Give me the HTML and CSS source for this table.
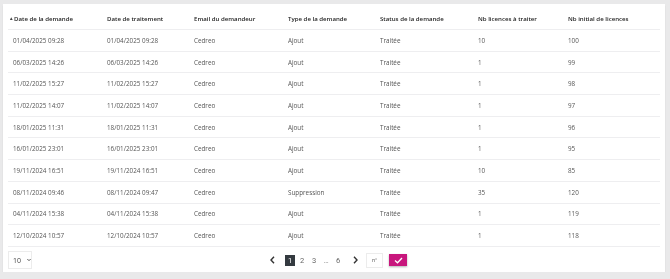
FILE: index.html
```html
<!DOCTYPE html>
<html lang="fr">
<head>
<meta charset="utf-8">
<link rel="stylesheet" href="styles.css">
</head>
<body>
<div class="card">
  <table class="grid">
    <colgroup>
      <col class="c1"><col class="c2"><col class="c3"><col class="c4"><col class="c5"><col class="c6"><col class="c7">
    </colgroup>
    <thead>
      <tr>
        <th><span class="sort">&#9652;</span>Date de la demande</th>
        <th>Date de traitement</th>
        <th>Email du demandeur</th>
        <th>Type de la demande</th>
        <th>Status de la demande</th>
        <th>Nb licences à traiter</th>
        <th>Nb initial de licences</th>
      </tr>
    </thead>
    <tbody>
      <tr><td>01/04/2025 09:28</td><td>01/04/2025 09:28</td><td>Cedreo</td><td>Ajout</td><td>Traitée</td><td>10</td><td>100</td></tr>
      <tr><td>06/03/2025 14:26</td><td>06/03/2025 14:26</td><td>Cedreo</td><td>Ajout</td><td>Traitée</td><td>1</td><td>99</td></tr>
      <tr><td>11/02/2025 15:27</td><td>11/02/2025 15:27</td><td>Cedreo</td><td>Ajout</td><td>Traitée</td><td>1</td><td>98</td></tr>
      <tr><td>11/02/2025 14:07</td><td>11/02/2025 14:07</td><td>Cedreo</td><td>Ajout</td><td>Traitée</td><td>1</td><td>97</td></tr>
      <tr><td>18/01/2025 11:31</td><td>18/01/2025 11:31</td><td>Cedreo</td><td>Ajout</td><td>Traitée</td><td>1</td><td>96</td></tr>
      <tr><td>16/01/2025 23:01</td><td>16/01/2025 23:01</td><td>Cedreo</td><td>Ajout</td><td>Traitée</td><td>1</td><td>95</td></tr>
      <tr><td>19/11/2024 16:51</td><td>19/11/2024 16:51</td><td>Cedreo</td><td>Ajout</td><td>Traitée</td><td>10</td><td>85</td></tr>
      <tr><td>08/11/2024 09:46</td><td>08/11/2024 09:47</td><td>Cedreo</td><td>Suppression</td><td>Traitée</td><td>35</td><td>120</td></tr>
      <tr><td>04/11/2024 15:38</td><td>04/11/2024 15:38</td><td>Cedreo</td><td>Ajout</td><td>Traitée</td><td>1</td><td>119</td></tr>
      <tr><td>12/10/2024 10:57</td><td>12/10/2024 10:57</td><td>Cedreo</td><td>Ajout</td><td>Traitée</td><td>1</td><td>118</td></tr>
    </tbody>
  </table>
  <div class="footer">
    <div class="left">
      <div class="select">10 <svg width="6" height="4" viewBox="0 0 6 4"><path d="M0.5 0.5 L3 3 L5.5 0.5" fill="none" stroke="#333" stroke-width="1.2"/></svg></div>
    </div>
    <div class="pager">
      <span class="arrow prev"><svg width="5" height="8" viewBox="0 0 5 8"><path d="M4 0.8 L1 4 L4 7.2" fill="none" stroke="#333" stroke-width="1.4"/></svg></span>
      <span class="page active">1</span>
      <span class="page">2</span>
      <span class="page">3</span>
      <span class="page dots">...</span>
      <span class="page">6</span>
      <span class="arrow next"><svg width="5" height="8" viewBox="0 0 5 8"><path d="M1 0.8 L4 4 L1 7.2" fill="none" stroke="#333" stroke-width="1.4"/></svg></span>
      <span class="num">n°</span>
      <span class="go"><svg width="9" height="7" viewBox="0 0 9 7"><path d="M1 3.5 L3.5 5.8 L8 1" fill="none" stroke="#fff" stroke-width="1.3"/></svg></span>
    </div>
    <div class="right"></div>
  </div>
</div>
</body>
</html>
```

FILE: styles.css
```css
html, body {
  margin: 0;
  padding: 0;
  background: #e9e9ea;
}
body {
  padding: 4px 5px 0 3px;
  font-family: "Open Sans", "Noto Sans", sans-serif;
}
.card {
  background: #fff;
  width: 662px;
  height: 268px;
  box-shadow: 0 2px 1px #cfcfd1;
  padding: 0 5px;
  box-sizing: border-box;
}
.grid {
  width: 652px;
  border-collapse: collapse;
  table-layout: fixed;
  will-change: transform;
}
.c1 { width: 94px; }
.c2 { width: 87px; }
.c3 { width: 94px; }
.c4 { width: 92px; }
.c5 { width: 98px; }
.c6 { width: 90px; }
.c7 { width: 97px; }
th, td {
  text-align: left;
  padding: 0 0 0 5px;
  white-space: nowrap;
  border-bottom: 1px solid #eeeef0;
}
th {
  height: 21px;
  padding-top: 4px;
  font-size: 6.1px;
  font-weight: 600;
  color: #222;
}
td {
  height: 20.7px;
  font-size: 6.3px;
  color: #555;
}
.sort {
  font-size: 5px;
  margin-left: -3px;
  margin-right: 1px;
  color: #444;
  vertical-align: 1px;
}
.footer {
  display: grid;
  grid-template-columns: 1fr auto 1fr;
  align-items: center;
  padding-top: 4px;
  will-change: transform;
}
.select {
  width: 24px;
  height: 18px;
  box-sizing: border-box;
  border: 1px solid #ececec;
  display: flex;
  align-items: center;
  gap: 6px;
  padding-left: 4px;
  font-size: 7px;
  color: #444;
}
.pager {
  display: flex;
  align-items: center;
  font-family: Roboto, sans-serif;
  font-size: 7.5px;
  color: #666;
  margin-left: 7px;
}
.arrow {
  display: flex;
  align-items: center;
  width: 8px;
  justify-content: center;
}
.arrow.prev { margin-right: 9px; }
.arrow.next { margin-left: 8px; }
.page {
  width: 10px;
  height: 11px;
  margin-left: 2px;
  display: flex;
  align-items: center;
  justify-content: center;
}
.page.active {
  margin-left: 0;
  background: #343a40;
  color: #fff;
}
.page.dots { letter-spacing: -0.5px; color: #888; }
.num {
  margin-left: 7px;
  width: 17px;
  height: 15px;
  box-sizing: border-box;
  border: 1px solid #ececec;
  display: flex;
  align-items: center;
  justify-content: center;
  font-size: 5.5px;
  color: #666;
}
.go {
  margin-left: 6px;
  width: 18px;
  height: 12px;
  background: #c8177d;
  box-shadow: 0 1px 2px rgba(0,0,0,0.3);
  display: flex;
  align-items: center;
  justify-content: center;
}
```
